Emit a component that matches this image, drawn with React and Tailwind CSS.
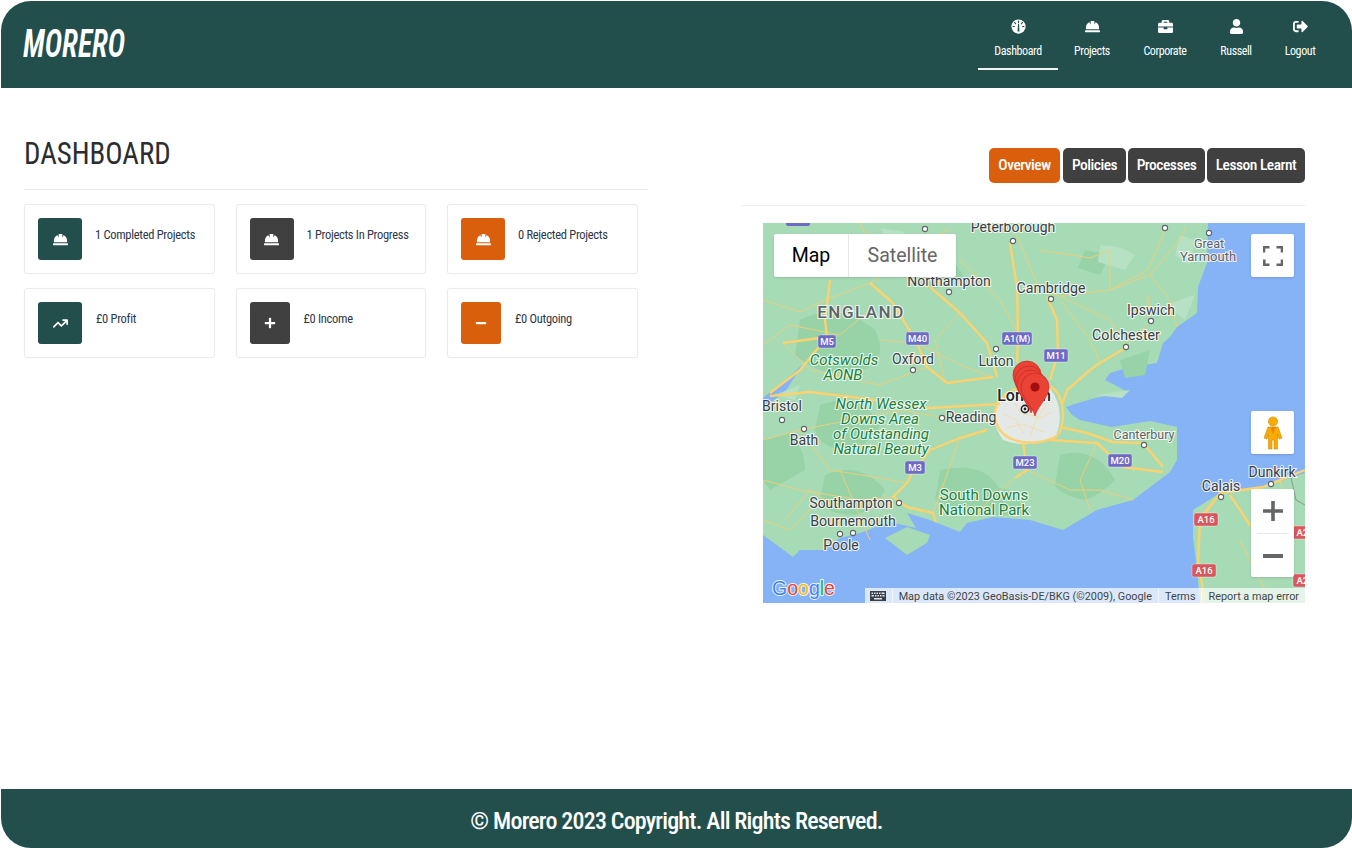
import { FaHardHat, FaBriefcase, FaUser, FaSignOutAlt, FaPlus, FaMinus } from 'react-icons/fa'
import { FaArrowTrendUp } from 'react-icons/fa6'

function GaugeIcon({ className }) {
  return (
    <svg viewBox="0 0 16 16" className={className}>
      <circle cx="8" cy="8" r="7.6" fill="currentColor" />
      <path d="M8 2.2V3.6M3.9 3.9L4.9 4.9M12.1 3.9L11.1 4.9M2.2 8H3.6M13.8 8H12.4" stroke="#224f4c" strokeWidth="1.3" strokeLinecap="round" />
      <path d="M7 13.4L7.5 5H8.5L9 13.4Z" fill="#224f4c" />
    </svg>
  )
}

const NAV = [
  { label: 'Dashboard', icon: GaugeIcon, width: 'w-[80px]', active: true },
  { label: 'Projects', icon: FaHardHat, width: 'w-[68px]' },
  { label: 'Corporate', icon: FaBriefcase, width: 'w-[78px]' },
  { label: 'Russell', icon: FaUser, width: 'w-[64px]' },
  { label: 'Logout', icon: FaSignOutAlt, width: 'w-[64px]' },
]

const STATS = [
  { label: '1 Completed Projects', icon: FaHardHat, tone: 'bg-[#224f4c]', box: 'w-[44px]', gap: 'ml-[13px]' },
  { label: '1 Projects In Progress', icon: FaHardHat, tone: 'bg-[#404040]', box: 'w-[44px]', gap: 'ml-[13px]' },
  { label: '0 Rejected Projects', icon: FaHardHat, tone: 'bg-[#da5f0c]', box: 'w-[44px]', gap: 'ml-[13px]' },
  { label: '£0 Profit', icon: FaArrowTrendUp, tone: 'bg-[#224f4c]', box: 'w-[44px]', gap: 'ml-[14px]' },
  { label: '£0 Income', icon: FaPlus, tone: 'bg-[#404040]', box: 'w-[40px]', gap: 'ml-[14px]', small: true },
  { label: '£0 Outgoing', icon: FaMinus, tone: 'bg-[#da5f0c]', box: 'w-[40px]', gap: 'ml-[14px]', small: true },
]

const TABS = [
  { label: 'Overview', tone: 'bg-[#da5f0c] w-[71px] mr-[3px]' },
  { label: 'Policies', tone: 'bg-[#404040] w-[63px] mr-[2px]' },
  { label: 'Processes', tone: 'bg-[#404040] w-[77px] mr-[2px]' },
  { label: 'Lesson Learnt', tone: 'bg-[#404040] w-[98px]' },
]

const COND = "font-['Roboto',sans-serif] [font-stretch:75%]"

const MAJOR_ROADS = [
  'M870 283L893 303L917 343L927 367L947 383L993 377',
  'M930 287L960 313L987 343L997 377',
  'M1010 243L1017 287L1018 333L1017 363',
  'M830 280L825 320L827 337L783 343',
  'M827 337L800 370L770 393',
  'M770 396L810 392L860 398L930 408L1000 404',
  'M893 497L907 483L912 473L930 450L960 438L987 430',
  'M893 497L907 507L933 513L936 522',
  'M1023 443L1027 470L1015 478',
  'M1047 297L1057 320L1058 353L1050 380',
  'M1127 347L1100 363L1090 370L1067 390L1062 405',
  'M1050 440L1097 443L1123 467L1163 472',
  'M1060 427L1087 433L1113 442L1143 443L1163 467',
  'M995 418C993 392 1020 384 1048 386C1066 392 1066 425 1057 436C1036 448 1000 445 995 418Z',
  'M1220 493L1200 520L1198 560L1205 603',
  'M1220 493L1263 487L1305 470',
  'M1230 495L1250 525L1290 535',
]

const MINOR_ROADS = [
  'M763 300L800 312L825 300L870 283L900 265L930 287',
  'M860 223L880 262L930 240L950 228',
  'M1017 287L1060 296L1110 290L1150 275L1180 240L1186 226',
  'M1060 296L1110 320L1127 347L1150 320L1148 295',
  'M1110 250L1110 290L1148 270L1165 230',
  'M1015 232L1040 290',
  'M763 440L800 430L830 470L880 478L907 483',
  'M763 480L800 490L860 500L893 497',
  'M800 430L850 420L900 410L945 418',
  'M840 470L870 540',
  'M960 438L945 480L933 513',
  'M1015 478L990 500L970 520',
  'M1027 470L1070 490L1100 490L1133 500',
  'M1097 443L1080 480L1090 510',
  'M1060 300L1090 340L1100 363',
  'M880 340L917 343L960 365L993 377',
  'M783 343L810 370L880 385L927 367',
  'M1220 493L1195 520',
  'M1240 540L1270 600',
  'M1280 480L1290 520L1305 540',
  'M763 345L790 325L840 335L870 310',
  'M960 313L935 340L945 383',
  'M1040 250L1090 258L1110 250',
  'M960 260L1000 300L1018 333',
  'M1150 275L1170 300L1177 327',
  'M785 520L810 490L840 510',
  'M763 520L790 530L820 500',
]

// fine street web inside the ring road
const CITY_STREETS = [
  'M1003 414L1016 420L1024 434',
  'M1012 398L1020 412L1040 418L1052 412',
  'M1030 436L1036 420L1048 402',
  'M1006 428L1022 424L1044 432',
]

const GREEN_PATCHES = [
  'M800 320Q840 300 875 330Q885 350 875 365Q830 385 795 355Z',
  'M820 405Q860 390 880 425Q870 445 850 450Q820 450 815 430Z',
  'M825 475Q860 460 885 490Q875 510 855 515Q825 515 820 500Z',
  'M763 440L790 432Q805 450 805 470L770 490L763 480Z',
  'M940 470Q985 460 1000 490Q980 505 960 510L935 500Z',
  'M1085 250L1110 255L1100 275L1078 268Z',
  'M1060 455Q1095 445 1115 480Q1100 495 1085 500Q1060 495 1055 485Z',
  'M915 255Q950 245 965 280L930 290Z',
  'M960 480L1010 490L1030 515L975 515Z',
  'M1120 360L1150 350L1145 375L1125 378Z',
]

const LIGHT_PATCHES = [
  'M1100 245Q1120 245 1135 255L1125 270L1098 262Z',
  'M1180 235L1195 240L1190 265L1175 255Z',
  'M1165 305L1195 295L1185 320Z',
  'M775 395L800 385L795 400Z',
  'M1095 395L1130 390L1122 398Z',
  'M880 228L905 232L890 245Z',
]

const LABELS = [
  { x: 1013, y: 232, t: 'Peterborough', size: 14, fill: '#3c4043' },
  { x: 1209, y: 248, t: 'Great', size: 12.5, fill: '#5f6368' },
  { x: 1208, y: 261, t: 'Yarmouth', size: 13, fill: '#5f6368' },
  { x: 949, y: 286, t: 'Northampton', size: 14, fill: '#3c4043' },
  { x: 1051, y: 293, t: 'Cambridge', size: 14.2, fill: '#3c4043' },
  { x: 1151, y: 315, t: 'Ipswich', size: 14, fill: '#3c4043' },
  { x: 1126, y: 340, t: 'Colchester', size: 14.2, fill: '#3c4043' },
  { x: 861, y: 318, t: 'ENGLAND', size: 17, fill: '#5f6368', weight: 500, spacing: 1.5 },
  { x: 913, y: 364, t: 'Oxford', size: 14, fill: '#3c4043' },
  { x: 996, y: 366, t: 'Luton', size: 14, fill: '#3c4043' },
  { x: 1024, y: 401, t: 'London', size: 16, fill: '#202124', weight: 500 },
  { x: 782, y: 411, t: 'Bristol', size: 14, fill: '#3c4043' },
  { x: 804, y: 445, t: 'Bath', size: 14, fill: '#3c4043' },
  { x: 971, y: 422, t: 'Reading', size: 14, fill: '#3c4043' },
  { x: 1144, y: 439, t: 'Canterbury', size: 12.5, fill: '#5f6368' },
  { x: 1272, y: 477, t: 'Dunkirk', size: 14, fill: '#3c4043' },
  { x: 1221, y: 491, t: 'Calais', size: 14, fill: '#3c4043' },
  { x: 851, y: 508, t: 'Southampton', size: 13.8, fill: '#3c4043' },
  { x: 853, y: 526, t: 'Bournemouth', size: 14.2, fill: '#3c4043' },
  { x: 841, y: 550, t: 'Poole', size: 14, fill: '#3c4043' },
  { x: 844, y: 365, t: 'Cotswolds', size: 15, fill: '#188038', italic: true },
  { x: 843, y: 380, t: 'AONB', size: 15, fill: '#188038', italic: true },
  { x: 881, y: 409, t: 'North Wessex', size: 15, fill: '#188038', italic: true },
  { x: 880, y: 424, t: 'Downs Area', size: 15, fill: '#188038', italic: true },
  { x: 881, y: 439, t: 'of Outstanding', size: 15, fill: '#188038', italic: true },
  { x: 881, y: 454, t: 'Natural Beauty', size: 15, fill: '#188038', italic: true },
  { x: 984, y: 500, t: 'South Downs', size: 15, fill: '#188038' },
  { x: 984, y: 515, t: 'National Park', size: 15, fill: '#188038' },
]

const TOWNS = [
  [925, 229], [1013, 241], [1165, 228], [1209, 233], [949, 292], [1051, 299], [1151, 321], [1126, 347], [913, 370],
  [996, 349], [942, 418], [782, 420], [804, 429], [1144, 445], [1271, 484], [1221, 497], [899, 503], [840, 534], [853, 533],
]

const SHIELDS = [
  { x: 818, y: 335, w: 18, t: 'M5', c: '#6d6bc6' },
  { x: 906, y: 332, w: 23, t: 'M40', c: '#6d6bc6' },
  { x: 1002, y: 332, w: 30, t: 'A1(M)', c: '#6d6bc6' },
  { x: 1044, y: 349, w: 24, t: 'M11', c: '#6d6bc6' },
  { x: 905, y: 461, w: 20, t: 'M3', c: '#6d6bc6' },
  { x: 1013, y: 456, w: 24, t: 'M23', c: '#6d6bc6' },
  { x: 1108, y: 454, w: 24, t: 'M20', c: '#6d6bc6' },
  { x: 1194, y: 513, w: 24, t: 'A16', c: '#d9575c' },
  { x: 1192, y: 564, w: 24, t: 'A16', c: '#d9575c' },
  { x: 1293, y: 526, w: 24, t: 'A26', c: '#d9575c' },
  { x: 1293, y: 574, w: 24, t: 'A26', c: '#d9575c' },
]

function MapPin({ x, y }) {
  return (
    <g transform={`translate(${x} ${y})`}>
      <path d="M0 42C-3 31 -14 24 -14 13A14 14 0 0 1 14 13C14 24 3 31 0 42Z" fill="#ea4335" stroke="#c5221f" strokeWidth="0.6" />
      <circle cx="0" cy="13" r="4.6" fill="#a50e0e" />
    </g>
  )
}

function MapCanvas() {
  return (
    <svg viewBox="763 223 542 380" className="block w-full h-full" aria-hidden>
      <rect x="763" y="223" width="542" height="380" fill="#86b2f6" />
      <path
        d="M763 223H1208L1207 263L1198 287L1197 313L1177 327L1170 337L1163 343L1157 363L1130 367L1110 373L1105 380L1128 392L1095 398L1078 403L1066 407L1072 415L1080 420L1112 427L1150 421L1177 427L1177 460L1170 472L1133 500L1097 510L1063 530L1030 520L993 517L967 523L960 532L930 520L907 513L916 528L890 522L860 533L840 538L823 550L800 550L793 557L763 535V408L785 392L803 364L790 376L763 398Z"
        fill="#a7dbb6"
      />
      <path d="M885 538L907 527L930 535L927 543L907 555Z" fill="#a7dbb6" />
      <path d="M1305 473L1263 487L1220 493L1193 510L1193 537L1197 570L1200 603H1305Z" fill="#a7dbb6" />
      {GREEN_PATCHES.map(d => (
        <path key={d} d={d} fill="#97d3a7" />
      ))}
      {LIGHT_PATCHES.map(d => (
        <path key={d} d={d} fill="#b6e1c3" />
      ))}
      <path d="M996 405Q1018 384 1050 388Q1066 410 1056 436Q1030 450 1003 440Q990 422 996 405Z" fill="#e4e8e6" />
      <path d="M1290 473L1296 500L1305 505" fill="none" stroke="#7c8a85" strokeWidth="0.8" />
      {MINOR_ROADS.map(d => (
        <path key={d} d={d} fill="none" stroke="#e9cf7c" strokeWidth="1" />
      ))}
      {CITY_STREETS.map(d => (
        <path key={d} d={d} fill="none" stroke="#f6dc9a" strokeWidth="0.8" />
      ))}
      {MAJOR_ROADS.map(d => (
        <path key={d} d={d} fill="none" stroke="#fbd26e" strokeWidth="2.4" strokeLinejoin="round" />
      ))}
      {TOWNS.map(([x, y]) => (
        <circle key={`${x}-${y}`} cx={x} cy={y} r="2.6" fill="#fff" stroke="#5f6368" strokeWidth="1.1" />
      ))}
      <circle cx="1025" cy="409" r="3.6" fill="#fff" stroke="#202124" strokeWidth="1.6" />
      <circle cx="1025" cy="409" r="1.4" fill="#202124" />
      <rect x="786" y="219" width="24" height="7" rx="2" fill="#6d6bc6" />
      {SHIELDS.map(s => (
        <g key={`${s.x}-${s.y}`}>
          <rect x={s.x} y={s.y} width={s.w} height="13" rx="2" fill={s.c} stroke="#ffffff" strokeOpacity="0.5" strokeWidth="0.7" />
          <text x={s.x + s.w / 2} y={s.y + 10} textAnchor="middle" fontSize="9.5" fontWeight="500" fontFamily="Roboto, sans-serif" fill="#fff">
            {s.t}
          </text>
        </g>
      ))}
      {LABELS.map(l => (
        <text
          key={l.t}
          x={l.x}
          y={l.y}
          textAnchor="middle"
          fontFamily="Roboto, sans-serif"
          fontSize={l.size}
          fontWeight={l.weight ?? 400}
          fontStyle={l.italic ? 'italic' : 'normal'}
          letterSpacing={l.spacing ?? 0}
          fill={l.fill}
          stroke="#ffffff"
          strokeOpacity="0.8"
          strokeWidth="2.2"
          paintOrder="stroke"
        >
          {l.t}
        </text>
      ))}
      <MapPin x={1027} y={362} />
      <MapPin x={1029} y={367} />
      <MapPin x={1031} y={371} />
      <MapPin x={1035} y={374} />
      <text x="772" y="595" fontFamily="'Liberation Sans', sans-serif" fontSize="19.5" stroke="#ffffff" strokeWidth="1.8" strokeOpacity="0.9" paintOrder="stroke">
        <tspan fill="#4285f4">G</tspan>
        <tspan fill="#ea4335">o</tspan>
        <tspan fill="#fbbc05">o</tspan>
        <tspan fill="#4285f4">g</tspan>
        <tspan fill="#34a853">l</tspan>
        <tspan fill="#ea4335">e</tspan>
      </text>
    </svg>
  )
}

function MapPanel() {
  return (
    <div className="relative w-[542px] h-[380px] ml-[22px] overflow-hidden font-['Roboto',sans-serif] [font-stretch:100%]">
      <MapCanvas />

      <div className="absolute left-[11px] top-[11px] flex h-[43px] bg-white rounded-[2px] shadow text-[19.5px]">
        <div className="w-[75px] flex items-center justify-center text-black border-r border-[#e6e6e6]">Map</div>
        <div className="w-[107px] flex items-center justify-center text-[#666666]">Satellite</div>
      </div>

      <div className="absolute right-[11px] top-[11px] w-[43px] h-[43px] bg-white rounded-[2px] shadow flex items-center justify-center">
        <svg width="20" height="20" viewBox="0 0 20 20" fill="none" stroke="#666666" strokeWidth="2.6">
          <path d="M1 6.5V1.3H6.5M13.5 1.3H19V6.5M19 13.5V18.7H13.5M6.5 18.7H1.3V13.5" />
        </svg>
      </div>

      <div className="absolute right-[11px] top-[188px] w-[43px] h-[43px] bg-white rounded-[2px] shadow flex items-center justify-center">
        <svg width="20" height="34" viewBox="0 0 20 34" stroke="#c98a0c" strokeWidth="0.6" fill="#f9ab00">
          <circle cx="10" cy="5.5" r="4.6" />
          <path d="M5 11H15L19 22L16 23L14.5 18V33H11V24H9V33H5.5V18L4 23L1 22Z" />
          <path d="M7 11H13L10 18Z" fill="#ea8600" stroke="none" />
        </svg>
      </div>

      <div className="absolute right-[11px] top-[266px] w-[43px] h-[88px] bg-white rounded-[2px] shadow flex flex-col items-center">
        <div className="h-[44px] w-full flex items-center justify-center">
          <svg width="20" height="20" viewBox="0 0 20 20" fill="#666666">
            <path d="M8.2 0H11.8V8.2H20V11.8H11.8V20H8.2V11.8H0V8.2H8.2Z" />
          </svg>
        </div>
        <div className="w-[32px] h-px bg-[#e6e6e6]" />
        <div className="flex-1 w-full flex items-center justify-center">
          <svg width="20" height="4" viewBox="0 0 20 4" fill="#666666">
            <rect width="20" height="4" />
          </svg>
        </div>
      </div>

      <div className="absolute right-0 bottom-0 h-[15px] flex items-center bg-white/70 text-[10.85px] leading-none text-[#444444]">
        <div className="w-[28px] h-full flex items-center justify-center border-r border-white/60">
          <svg width="16" height="10" viewBox="0 0 16 10" fill="#3c4043">
            <path d="M0 0H16V10H0ZM1.5 1.5V3H3V1.5ZM4 1.5V3H5.5V1.5ZM6.5 1.5V3H8V1.5ZM9 1.5V3H10.5V1.5ZM11.5 1.5V3H14.5V1.5ZM1.5 4V5.5H4V4ZM5 4V5.5H6.5V4ZM7.5 4V5.5H9V4ZM10 4V5.5H11.5V4ZM12.5 4V5.5H14.5V4ZM4 7V8.5H12V7Z" fillRule="evenodd" />
          </svg>
        </div>
        <span className="px-[6px] whitespace-nowrap border-r border-white/60 leading-[15px] pt-px">Map data ©2023 GeoBasis-DE/BKG (©2009), Google</span>
        <span className="px-[6px] whitespace-nowrap border-r border-white/60 leading-[15px] pt-px">Terms</span>
        <span className="px-[6px] whitespace-nowrap leading-[15px] pt-px">Report a map error</span>
      </div>
    </div>
  )
}

export default function App() {
  return (
    <div className={`h-[848px] w-[1352px] overflow-hidden flex flex-col bg-white pl-px pt-px ${COND}`}>
      <header className="h-[87px] shrink-0 bg-[#224f4c] rounded-t-[30px] flex items-start justify-between pl-[22px] pr-[20px]">
        <div className="mt-[21px] text-[38px] leading-[45px] font-semibold italic text-white origin-left scale-x-[0.78]">MORERO</div>
        <nav className="flex mt-[16px]">
          {NAV.map(item => {
            const Icon = item.icon
            return (
              <div
                key={item.label}
                className={`${item.width} h-[53px] flex flex-col items-center text-white text-[12px] tracking-[-0.4px] border-b-2 ${item.active ? 'border-[#f2f2f2]' : 'border-transparent'}`}
              >
                <Icon className="mt-[2px] w-[15px] h-[15px]" />
                <span className="mt-[9px] leading-[16px]">{item.label}</span>
              </div>
            )
          })}
        </nav>
      </header>

      <main className="flex-1 flex items-start pl-[23px] pr-[46px]">
        <section className="w-[624px] mt-[43px]">
          <h1 className="text-[32px] leading-[44px] font-normal text-[#2b2d30] pb-[14px] border-b border-[#e9e9e9]">
            <span className="inline-block origin-left scale-x-[0.9]">DASHBOARD</span>
          </h1>
          <div className="grid grid-cols-[190.5px_190.5px_190.5px] gap-x-[21px] gap-y-[14px] mt-[14px]">
            {STATS.map(stat => {
              const Icon = stat.icon
              return (
                <div key={stat.label} className="h-[70px] bg-white border border-[#ebebeb] rounded-[3px] flex items-start pl-[13px] pt-[13px] shadow-[0_0_2px_rgba(0,0,0,0.04)]">
                  <div className={`${stat.box} ${stat.tone} h-[42px] rounded-[3px] flex items-center justify-center text-white`}>
                    <Icon className={stat.small ? 'w-[12px] h-[12px]' : 'w-[15px] h-[15px]'} />
                  </div>
                  <span className={`${stat.gap} mt-[8px] text-[12.5px] tracking-[-0.3px] leading-[18px] text-[#2d3748]`}>{stat.label}</span>
                </div>
              )
            })}
          </div>
        </section>

        <section className="w-[564px] ml-[93px] mt-[60px]">
          <div className="flex justify-end pb-[22px] border-b border-[#eeeeee]">
            {TABS.map(tab => (
              <div key={tab.label} className={`${tab.tone} h-[35px] rounded-[5px] flex items-center justify-center text-white text-[15.5px] tracking-[-0.5px] font-medium`}>
                {tab.label}
              </div>
            ))}
          </div>
          <div className="mt-[17px]">
            <MapPanel />
          </div>
        </section>
      </main>

      <footer className="h-[59px] shrink-0 bg-[#224f4c] rounded-b-[30px] flex items-center justify-center pt-[5px] text-white text-[24px] tracking-[-0.8px] font-medium">
        © Morero 2023 Copyright. All Rights Reserved.
      </footer>
    </div>
  )
}
